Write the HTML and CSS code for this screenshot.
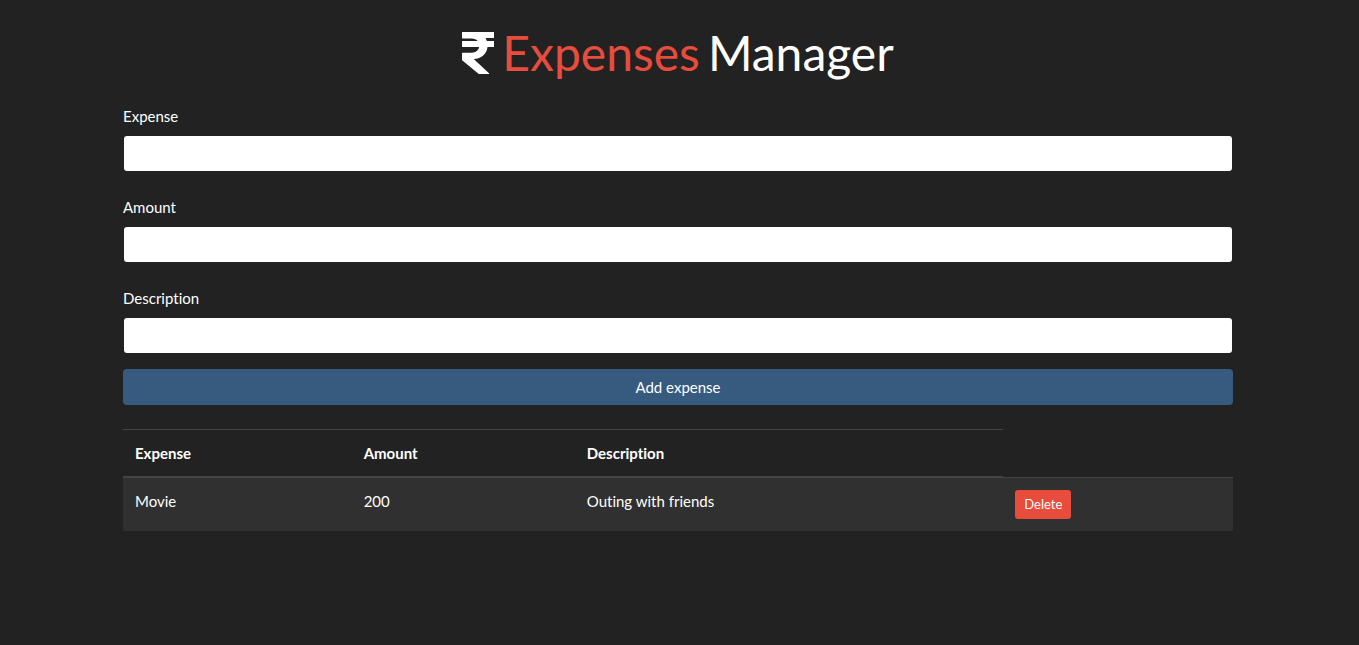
FILE: index.html
```html
<!DOCTYPE html>
<html lang="en">
<head>
<meta charset="utf-8">
<meta name="viewport" content="width=device-width, initial-scale=1">
<title>Expenses Manager</title>
<link rel="stylesheet" href="styles.css">
</head>
<body>
<main class="container">
  <h1 class="title">
    <svg class="title-icon" viewBox="0 0 320 448" preserveAspectRatio="none" aria-hidden="true"><path fill="currentColor" d="M320 64V0H0v64q0 5 5 5h92c27 0 48 10 61 27H0v64h171c-6 36-33 60-72 60H0v74q0 5 4 9l164 145h104q2-4-2-8L117 288c76-2 131-53 138-128h65V96h-71c-3-12-8-22-14-32z"/></svg>
    <span class="title-accent">Expenses</span>
    <span>Manager</span>
  </h1>
  <form class="expense-form">
    <div class="field">
      <label for="expense">Expense</label>
      <input class="control" type="text" id="expense">
    </div>
    <div class="field">
      <label for="amount">Amount</label>
      <input class="control" type="text" id="amount">
    </div>
    <div class="field">
      <label for="description">Description</label>
      <input class="control" type="text" id="description">
    </div>
    <button class="btn btn-primary" type="button">Add expense</button>
  </form>
  <table class="expenses">
    <colgroup>
      <col class="col-expense">
      <col class="col-amount">
      <col class="col-description">
      <col class="col-action">
    </colgroup>
    <thead>
      <tr><th scope="col">Expense</th><th scope="col">Amount</th><th scope="col">Description</th></tr>
    </thead>
    <tbody>
      <tr><td>Movie</td><td>200</td><td>Outing with friends</td><td><button class="btn btn-danger" type="button">Delete</button></td></tr>
    </tbody>
  </table>
</main>
</body>
</html>
```
FILE: styles.css
```css
*,
*::before,
*::after {
  box-sizing: border-box;
}

body {
  margin: 0;
  padding-right: 3px;
  background: #222;
  color: #fff;
  font-family: Lato, "Liberation Sans", sans-serif;
  font-size: 15px;
  font-variant-ligatures: none;
  line-height: 23px;
}

.container {
  max-width: 1140px;
  margin: 0 auto;
  padding: 24px 15px;
}

.title {
  display: flex;
  justify-content: center;
  align-items: center;
  gap: 8px;
  margin: 0 0 23px;
  font-size: 48px;
  font-weight: 400;
  line-height: 58px;
}

.title-icon {
  width: 32px;
  height: 42px;
}

.title-accent {
  color: #e74c3c;
}

.field {
  margin-bottom: 24px;
}

.field:last-of-type {
  margin-bottom: 15px;
}

.field label {
  display: block;
  margin-bottom: 7px;
}

.control {
  display: block;
  width: 100%;
  height: 37px;
  padding: 6px 12px;
  border: 1px solid transparent;
  border-radius: 4px;
  background: #fff;
  background-clip: padding-box;
  color: #444;
  font: inherit;
}

.btn {
  display: block;
  border: 1px solid transparent;
  color: #fff;
  font-family: inherit;
  font-variant-ligatures: none;
  text-align: center;
  cursor: pointer;
}

.btn-primary {
  width: 100%;
  height: 36px;
  border-radius: 4px;
  background: #375a7f;
  font-size: 15px;
  line-height: 23px;
}

.btn-danger {
  padding: 4px 8px;
  border-radius: 3px;
  background: #e74c3c;
  font-size: 13px;
  line-height: 19px;
}

.expenses {
  width: 100%;
  margin-top: 24px;
  border-collapse: collapse;
  table-layout: fixed;
}

.col-expense {
  width: 20.6%;
}

.col-amount {
  width: 20.1%;
}

.col-description {
  width: 38.6%;
}

.col-action {
  width: 20.7%;
}

.expenses th,
.expenses td {
  padding: 12px;
  border-top: 1px solid #444;
  text-align: left;
  vertical-align: top;
}

.expenses th {
  padding-bottom: 11px;
  border-bottom: 2px solid #444;
}

.expenses tbody tr {
  background: #303030;
}
```
